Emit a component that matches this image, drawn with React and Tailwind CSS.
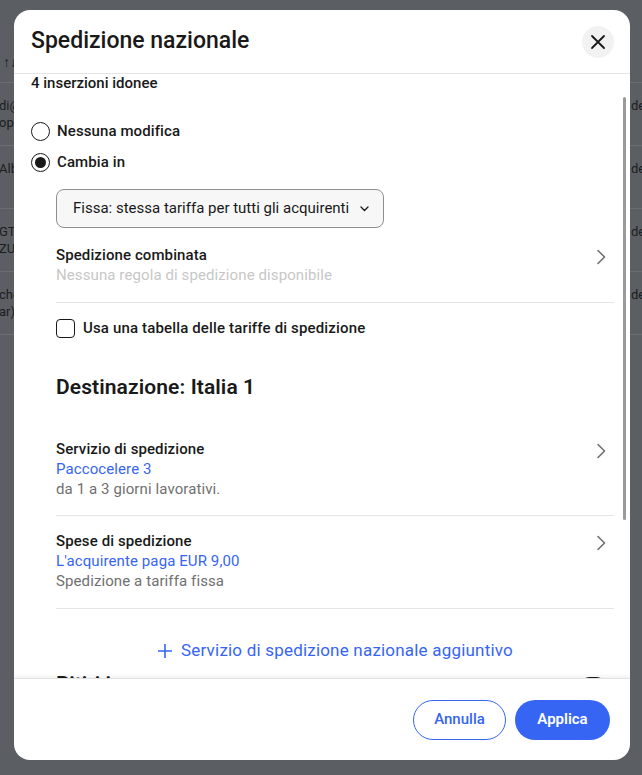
import React from 'react'

const rows = [
  { left: ['di@', 'ops'], right: 'de' },
  { left: ['Alb'], right: 'de' },
  { left: ['GT', 'ZU'], right: 'de' },
  { left: ['che', 'ar)'], right: 'de' },
]

function Chevron() {
  return (
    <svg width="20" height="20" viewBox="0 0 20 20" className="mr-[3px] mt-[2px] shrink-0 text-[#707070]">
      <path d="M7 3.5 13.5 10 7 16.5" fill="none" stroke="currentColor" strokeWidth="1.6" strokeLinecap="round" strokeLinejoin="round" />
    </svg>
  )
}

function Radio({ checked, label }) {
  return (
    <label className="flex h-6 items-center gap-[7px]">
      <span className="flex h-[19px] w-[19px] items-center justify-center rounded-full border-[1.5px] border-[#191919]">
        {checked && <span className="h-[11px] w-[11px] rounded-full bg-[#191919]" />}
      </span>
      <span className="text-[15px] font-medium leading-5 tracking-[0.1px]">{label}</span>
    </label>
  )
}

function Detail({ title, value, note, valueTone }) {
  return (
    <div className="flex items-start justify-between">
      <div className="leading-5 tracking-[0.1px]">
        <div className="text-[15px] font-medium">{title}</div>
        <div className={`text-[15px] ${valueTone}`}>{value}</div>
        {note && <div className="text-[15px] text-[#707070]">{note}</div>}
      </div>
      <Chevron />
    </div>
  )
}

export default function App() {
  return (
    <div className="relative h-[775px] w-[642px] overflow-hidden bg-[#5b5f63] font-['Roboto',sans-serif] text-[#1b1d1f]">
      {/* page behind the dialog */}
      <div className="pt-[52px]">
        <div className="flex h-[31px] items-start border-b border-[#6a6e72] pl-[3px] text-[14px] font-semibold">↑↓</div>
        {rows.map((row, i) => (
          <div key={i} className="flex h-[63px] justify-between border-b border-[#6a6e72] pt-[14px] text-[13px] leading-[17px]">
            <div className="-ml-[1px]">
              {row.left.map((t) => (
                <div key={t}>{t}</div>
              ))}
            </div>
            <div className="w-[11px] overflow-hidden whitespace-nowrap">{row.right}</div>
          </div>
        ))}
      </div>

      {/* dialog */}
      <div className="absolute left-[14px] top-[10px] flex h-[750px] w-[616px] flex-col overflow-hidden rounded-2xl bg-white text-[#191919]">
        <header className="flex h-[64px] shrink-0 items-center justify-between border-b border-[#e5e5e5] pl-[17px] pr-[16px]">
          <h2 className="text-[23px] font-medium">Spedizione nazionale</h2>
          <button className="flex h-8 w-8 items-center justify-center rounded-full bg-[#f2f2f2]">
            <svg width="16" height="16" viewBox="0 0 16 16">
              <path d="M2 2 14 14M14 2 2 14" stroke="#191919" strokeWidth="1.8" strokeLinecap="round" />
            </svg>
          </button>
        </header>

        <div className="relative flex-1 overflow-hidden">
          <div className="-mt-px pl-[17px] pr-[16px]">
            <p className="text-[15px] font-medium leading-5">4 inserzioni idonee</p>

            <div className="mt-[26px] flex flex-col gap-[7px]">
              <Radio label="Nessuna modifica" />
              <Radio checked label="Cambia in" />
            </div>

            <div className="pl-[25px]">
              <button className="mt-[15px] flex h-[39px] items-center gap-[11px] rounded-lg border border-[#8f8f8f] bg-[#f7f7f7] pl-[16px] pr-[14px] text-[15px]">
                Fissa: stessa tariffa per tutti gli acquirenti
                <svg width="9" height="6" viewBox="0 0 9 6">
                  <path d="M1 1 4.5 4.5 8 1" fill="none" stroke="#191919" strokeWidth="1.3" strokeLinecap="round" />
                </svg>
              </button>

              <div className="mt-[17px]">
                <Detail title="Spedizione combinata" value="Nessuna regola di spedizione disponibile" valueTone="text-[#c7c7c7]" />
              </div>

              <div className="mt-[17px] border-t border-[#e5e5e5]" />

              <label className="mt-[13px] flex h-6 items-center gap-2">
                <span className="h-[19px] w-[19px] rounded-[4px] border-[1.5px] border-[#191919]" />
                <span className="text-[15px] font-medium tracking-[0.15px]">Usa una tabella delle tariffe di spedizione</span>
              </label>

              <h3 className="mt-[33px] text-[21px] font-semibold leading-7 tracking-[0.1px]">Destinazione: Italia 1</h3>

              <div className="mt-[38px]">
                <Detail title="Servizio di spedizione" value="Paccocelere 3" note="da 1 a 3 giorni lavorativi." valueTone="text-[#3665f3]" />
              </div>
              <div className="mt-[16px] border-t border-[#e5e5e5]" />
              <div className="mt-[15px]">
                <Detail title="Spese di spedizione" value="L'acquirente paga EUR 9,00" note="Spedizione a tariffa fissa" valueTone="text-[#3665f3]" />
              </div>
              <div className="mt-[17px] border-t border-[#e5e5e5]" />

              <button className="mx-auto mt-[30px] flex h-6 items-center gap-2 text-[17px] tracking-[0.2px] text-[#3665f3]">
                <svg width="16" height="16" viewBox="0 0 16 16">
                  <path d="M8 1v14M1 8h14" stroke="#3665f3" strokeWidth="1.6" />
                </svg>
                Servizio di spedizione nazionale aggiuntivo
              </button>

              <div className="mt-[7px] flex items-start justify-between pr-[7px]">
                <h3 className="text-[21px] font-semibold leading-7">Ritiri in zona</h3>
                <span className="mt-[7px] h-[22px] w-[28px] rounded-full bg-[#191919]" />
              </div>
              <div className="h-[200px]" />
            </div>
          </div>
          <span className="absolute right-[4px] top-[23px] h-[423px] w-[3px] rounded-full bg-[#9a9a9a]" />
        </div>

        <footer className="flex h-[82px] shrink-0 items-center justify-end gap-[9px] border-t border-[#e2e2e2] pr-[20px] shadow-[0_-2px_4px_rgba(0,0,0,0.06)]">
          <button className="h-10 w-[93px] rounded-full border border-[#3665f3] text-[15px] font-medium text-[#3665f3]">Annulla</button>
          <button className="h-10 w-[95px] rounded-full bg-[#3665f3] text-[15px] font-semibold text-white">Applica</button>
        </footer>
      </div>
    </div>
  )
}
